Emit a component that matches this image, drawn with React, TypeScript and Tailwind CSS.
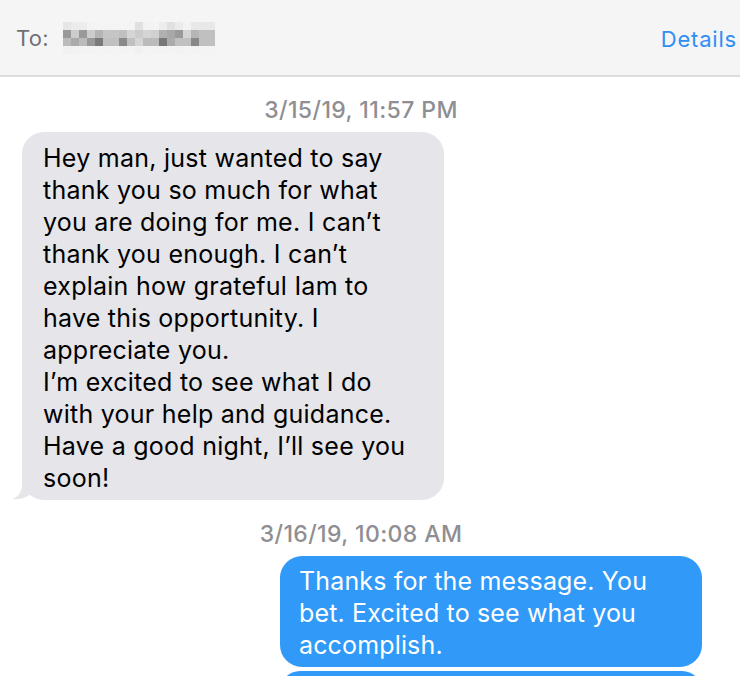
import React from "react";

const blur: string[][] = [
  ["#e6e6e6", "#ececec", "#ececec", "#f3f3f3", "#f4f4f4", "#f4f4f4", "#f4f4f4", "#f4f4f4", "#f4f4f4", "#e0e0e0", "#f2f2f2", "#f4f4f4", "#ececec", "#e0e0e0", "#ebebeb", "#f3f3f3", "#e8e8e8", "#e8e8e8", "#e8e8e8"],
  ["#9a9a9a", "#cccccc", "#999999", "#cccccc", "#b5b5b5", "#c5c5c5", "#c5c5c5", "#c0c0c0", "#d5d5d5", "#cccccc", "#d5d5d5", "#d0d0d0", "#b0b0b0", "#a8a8a8", "#9a9a9a", "#d5d5d5", "#b5b5b5", "#c0c0c0", "#c0c0c0"],
  ["#bbbbbb", "#aaaaaa", "#bbbbbb", "#999999", "#7a7a7a", "#c0c0c0", "#c0c0c0", "#8a8a8a", "#c0c0c0", "#d5d5d5", "#bbbbbb", "#bbbbbb", "#777777", "#aaaaaa", "#c0c0c0", "#c0c0c0", "#888888", "#c0c0c0", "#c0c0c0"],
  ["#f1f1f1", "#f2f2f2", "#f3f3f3", "#f3f3f3", "#f4f4f4", "#f3f3f3", "#f4f4f4", "#f3f3f3", "#f4f4f4", "#f1f1f1", "#f4f4f4", "#f3f3f3", "#f3f3f3", "#f4f4f4", "#f2f2f2", "#f4f4f4", "#f3f3f3", "#f4f4f4", "#f4f4f4"],
];

const received = [
  "Hey man, just wanted to say",
  "thank you so much for what",
  "you are doing for me. I can’t",
  "thank you enough. I can’t",
  "explain how grateful Iam to",
  "have this opportunity. I",
  "appreciate you.",
  "I’m excited to see what I do",
  "with your help and guidance.",
  "Have a good night, I’ll see you",
  "soon!",
];

const sent = ["Thanks for the message. You", "bet. Excited to see what you", "accomplish."];

function Stamp({ children }: { children: React.ReactNode }) {
  return (
    <div className="pr-[18px] text-center text-[23px] leading-[24px] font-medium tracking-[0.4px] text-[#8e8e93]">
      {children}
    </div>
  );
}

export default function App() {
  return (
    <div className="h-[676px] w-[740px] overflow-hidden bg-white" style={{ fontFamily: "Inter, 'Noto Sans', sans-serif" }}>
      <div className="flex h-[77px] items-center justify-between border-b-2 border-[#dcdcdc] bg-[#f5f5f5] pl-4 pr-[3px]">
        <div className="flex items-center">
          <span className="mt-[2px] text-[22px] tracking-[0.3px] text-[#707075]">To:</span>
          <div className="ml-[14px] mt-[1px] grid grid-cols-[repeat(19,8px)]">
            {blur.map((row, r) =>
              row.map((c, i) => <div key={r + "-" + i} className="h-2 w-2" style={{ backgroundColor: c }} />)
            )}
          </div>
        </div>
        <span className="mt-[3px] text-[22px] tracking-[0.8px] text-[#2f8ef6]">Details</span>
      </div>

      <div className="mt-[21px]">
        <Stamp>3/15/19, 11:57 PM</Stamp>
      </div>

      <div className="mt-[10px] pl-[22px]">
        <div className="relative w-[422px] rounded-[22px] bg-[#e5e5ea] pb-[6px] pl-[21px] pr-3 pt-[10px] text-[25px] leading-[32px] tracking-[0.25px] text-black">
          {received.map((l) => (
            <div key={l} className="whitespace-nowrap">
              {l}
            </div>
          ))}
          <svg className="absolute bottom-0 left-[-10px]" width="30" height="30" viewBox="0 0 30 30">
            <path d="M10 0 L10 14 C10 21 7 26 1 29 C8 30 15 27 20 23 L28 23 L28 0 Z" fill="#e5e5ea" />
          </svg>
        </div>
      </div>

      <div className="mt-[22px]">
        <Stamp>3/16/19, 10:08 AM</Stamp>
      </div>

      <div className="mt-[10px] flex flex-col items-end pr-[38px]">
        <div className="w-[422px] rounded-[22px] bg-[#3199f8] pb-[6px] pl-[19px] pr-3 pt-[9px] text-[25px] leading-[32px] tracking-[0.15px] text-white">
          {sent.map((l) => (
            <div key={l} className="whitespace-nowrap">
              {l}
            </div>
          ))}
        </div>
        <div className="mt-1 h-[40px] w-[422px] rounded-[22px] bg-[#3199f8]" />
      </div>
    </div>
  );
}
